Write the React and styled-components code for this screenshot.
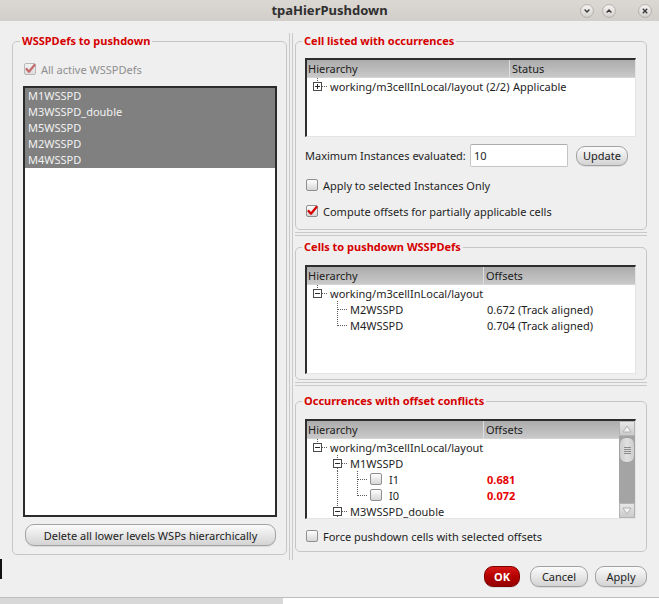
import React from 'react';
import styled, { createGlobalStyle } from 'styled-components';

/**
 * tpaHierPushdown dialog
 *
 */

const GlobalStyle = createGlobalStyle`
  html, body {
    margin: 0;
    padding: 0;
    background: #ffffff;
  }

  body {
    font-family: "Noto Sans", "DejaVu Sans", sans-serif;
    font-size: 11px;
    color: #1e1e1e;
  }

  * {
    box-sizing: border-box;
  }
`;

const Window = styled.div`
  position: relative;
  width: 659px;
  height: 598px;
  display: flex;
  flex-direction: column;
  background: #efefef;
  border-bottom: 1px solid #bdbdbd;
`;

const Backdrop = styled.div`
  width: 283px;
  height: 6px;
  background: #d8d8d8;
`;

const EdgeMark = styled.span`
  position: absolute;
  left: 0;
  top: 559px;
  width: 2px;
  height: 20px;
  background: #111111;
`;

const TitleBar = styled.header`
  flex: none;
  height: 21px;
  display: grid;
  grid-template-columns: 1fr auto 1fr;
  align-items: center;
  background: linear-gradient(#dbd7d3, #d2cec9);
`;

const TitleText = styled.h1`
  grid-column: 2;
  margin: 0;
  font-size: 13px;
  font-weight: bold;
  line-height: 21px;
  color: #2f2f2f;
`;

const WinButtons = styled.div`
  grid-column: 3;
  justify-self: end;
  display: flex;
  align-items: center;
  gap: 8px;
  padding-right: 7px;
`;

const WinSvg = styled.svg`
  display: block;
  flex: none;
  margin-left: ${({ $gapBefore }) => $gapBefore || 0}px;
`;

const Body = styled.div`
  flex: 1;
  display: flex;
  flex-direction: column;
  padding: 12px 12px 10px;
`;

const Main = styled.div`
  flex: none;
  height: 527px;
  display: flex;
  align-items: flex-start;
`;

const Group = styled.fieldset`
  margin: 0;
  min-width: 0;
  display: flex;
  flex-direction: column;
  border: 1px solid #c6c6c6;
  border-radius: 5px;
  padding: ${({ $pad }) => $pad};
`;

const LeftGroup = styled(Group)`
  flex: none;
  width: 275px;
  height: 521px;
  margin-top: 1px;
`;

const Legend = styled.legend`
  margin-left: -3px;
  padding: 0 2px;
  font-size: 11px;
  font-weight: bold;
  line-height: 14px;
  color: #d60000;
`;

const VSplitter = styled.div`
  flex: none;
  align-self: stretch;
  width: 4px;
  margin: 0 2px;
  border-left: 1px solid #c9c9c9;
  border-right: 1px solid #c9c9c9;
`;

const RightColumn = styled.div`
  flex: none;
  width: 352px;
  margin-top: 1px;
  display: flex;
  flex-direction: column;
`;

const HSplitter = styled.div`
  flex: none;
  height: 4px;
  margin: ${({ $top }) => $top}px 0 ${({ $bottom }) => $bottom}px;
  border-top: 1px solid #c9c9c9;
  border-bottom: 1px solid #c9c9c9;
`;

/* check boxes */

const CheckRow = styled.label`
  display: flex;
  align-items: center;
  gap: 5px;
  height: 16px;
  margin-top: ${({ $top }) => $top}px;
  padding-left: 1px;
  color: ${({ $disabled }) => ($disabled ? '#8e8e8e' : 'inherit')};
  white-space: nowrap;
`;

const Box = styled.span`
  flex: none;
  width: 12px;
  height: 12px;
  display: flex;
  align-items: center;
  justify-content: center;
  border: 1px solid ${({ $disabled }) => ($disabled ? '#b9b9b9' : '#8f8f8f')};
  border-radius: 2px;
  background: ${({ $disabled }) => ($disabled
    ? 'linear-gradient(#f2f2f2, #dddddd)'
    : 'linear-gradient(#fefefe, #d6d6d6)')};
`;

const CheckSvg = styled.svg`
  display: block;
  overflow: visible;
`;

const CheckBox = ({ checked, disabled }) => (
  <Box $disabled={disabled}>
    {checked ? (
      <CheckSvg width="10" height="10" viewBox="0 0 10 10">
        <path
          d="M1.5 5 L4 7.8 L9.5 1"
          fill="none"
          stroke={disabled ? '#c46a6a' : '#d40000'}
          strokeWidth="2.2"
          strokeLinecap="round"
          strokeLinejoin="round"
        />
      </CheckSvg>
    ) : null}
  </Box>
);

/* list */

const ListBox = styled.div`
  flex: 1;
  margin-top: 9px;
  background: #ffffff;
  border: 2px solid #2b2b2b;
`;

const ListItem = styled.div`
  height: 16px;
  line-height: 16px;
  padding-left: 3px;
  background: ${({ $selected }) => ($selected ? '#808080' : 'transparent')};
  color: ${({ $selected }) => ($selected ? '#f2f2f2' : 'inherit')};
`;

/* buttons */

const PillButton = styled.button`
  flex: none;
  width: ${({ $w }) => ($w ? `${$w}px` : 'auto')};
  height: ${({ $h }) => $h || 21}px;
  margin: ${({ $margin }) => $margin || 0};
  padding: 0;
  font-family: inherit;
  font-size: 11px;
  color: #222222;
  border: 1px solid #a2a2a2;
  border-radius: 9px;
  background: linear-gradient(#fbfbfb, #e9e9e9 45%, #d3d3d3);
  box-shadow: 0 1px 0 rgba(0, 0, 0, 0.08);
`;

const OkButton = styled(PillButton)`
  font-weight: bold;
  color: #ffffff;
  border-color: #7c0000;
  background: linear-gradient(#d81818, #b40000 50%, #960000);
`;

const ButtonRow = styled.div`
  display: flex;
  justify-content: flex-end;
  margin-top: 6px;
`;

/* max instances row */

const MaxRow = styled.div`
  display: grid;
  grid-template-columns: 165px 98px 60px;
  column-gap: 0;
  align-items: center;
  margin-top: 7px;
  height: 23px;

  & > button {
    margin-left: 8px;
  }
`;

const NumberInput = styled.input`
  width: 98px;
  height: 23px;
  padding: 0 0 0 3px;
  font-family: inherit;
  font-size: 11px;
  color: #1e1e1e;
  background: #ffffff;
  border: 1px solid #c4c4c4;
  border-top-color: #acacac;
  border-radius: 2px;
  outline: none;
`;

/* trees */

const TreeBox = styled.div`
  flex: none;
  display: flex;
  height: ${({ $h }) => $h}px;
  margin-top: ${({ $top }) => $top}px;
  overflow: hidden;
  background: #ffffff;
  border-style: solid;
  border-width: 2px 1px 1px 2px;
  border-color: #2e2e2e #e4e4e4 #e4e4e4 #2e2e2e;
`;

const TreeBody = styled.div`
  flex: 1;
  min-width: 0;
`;

const HeaderRow = styled.div`
  display: grid;
  grid-template-columns: ${({ $col }) => $col}px 1fr;
  height: 18px;
  line-height: 18px;
  background: linear-gradient(#acacac, #bdbdbd 60%, #c9c9c9);
  border-bottom: 1px solid #d4d4d4;
`;

const HeaderCell = styled.div`
  padding-left: 1px;
  color: #1c1c1c;

  & + & {
    padding-left: 2px;
    border-left: 1px solid #dedede;
  }
`;

const TreeRow = styled.div`
  display: grid;
  grid-template-columns: ${({ $col }) => $col}px 1fr;
  height: 16px;
  align-items: center;
`;

const NodeCell = styled.div`
  display: flex;
  align-items: center;
  height: 16px;
  white-space: nowrap;
`;

const NodeLabel = styled.span`
  margin-left: ${({ $gap }) => $gap || 3}px;
`;

const NodeCheck = styled.span`
  margin-left: 3px;
  display: flex;
`;

const ValueCell = styled.div`
  padding-left: 4px;
  white-space: nowrap;
  font-weight: ${({ $conflict }) => ($conflict ? 'bold' : 'normal')};
  color: ${({ $conflict }) => ($conflict ? '#e60000' : 'inherit')};
`;

const GuideSvg = styled.svg`
  display: block;
  flex: none;
`;

const dots = {
  stroke: '#5c5c5c',
  strokeWidth: 1,
  strokeDasharray: '1 1',
};

const Guide = ({ kind, up, down }) => (
  <GuideSvg width="20" height="16" viewBox="0 0 20 16" shapeRendering="crispEdges">
    {kind === 'line' || kind === 'tee' ? <line x1="10.5" y1="0" x2="10.5" y2="16" {...dots} /> : null}
    {kind === 'elbow' ? <line x1="10.5" y1="0" x2="10.5" y2="9" {...dots} /> : null}
    {kind === 'tee' || kind === 'elbow' ? <line x1="11" y1="8.5" x2="20" y2="8.5" {...dots} /> : null}
    {kind === 'plus' || kind === 'minus' ? (
      <g>
        {up ? <line x1="10.5" y1="0" x2="10.5" y2="4" {...dots} /> : null}
        {down ? <line x1="10.5" y1="13" x2="10.5" y2="16" {...dots} /> : null}
        <rect x="6.5" y="4.5" width="8" height="8" fill="#ffffff" stroke="#4a4a4a" />
        <line x1="8" y1="8.5" x2="13" y2="8.5" stroke="#2a2a2a" />
        {kind === 'plus' ? <line x1="10.5" y1="6" x2="10.5" y2="11" stroke="#2a2a2a" /> : null}
        <line x1="15" y1="8.5" x2="20" y2="8.5" {...dots} />
      </g>
    ) : null}
  </GuideSvg>
);

const ScrollBar = styled.div`
  flex: none;
  width: 16px;
  display: flex;
  flex-direction: column;
  background: #a4a4a4;
`;

const ScrollArrow = styled.div`
  flex: none;
  height: 15px;
  display: flex;
  align-items: center;
  justify-content: center;
  background: linear-gradient(#e6e6e6, #cbcbcb);
  border: 1px solid #b3b3b3;
`;

const ScrollThumb = styled.div`
  flex: none;
  height: 26px;
  margin: 1px 0 0;
  display: flex;
  flex-direction: column;
  align-items: center;
  justify-content: center;
  gap: 1px;
  border: 1px solid #a0a0a0;
  border-radius: 7px;
  background: linear-gradient(90deg, #cdcdcd, #e0e0e0 50%, #cdcdcd);
`;

const Grip = styled.span`
  width: 7px;
  height: 1px;
  background: #8c8c8c;
`;

const ScrollTrack = styled.div`
  flex: 1;
`;

const Arrow = ({ dir }) => (
  <svg width="10" height="8" viewBox="0 0 10 8">
    <polygon
      points={dir === 'up' ? '1,7 5,1 9,7' : '1,1 5,7 9,1'}
      fill="#f4f4f4"
      stroke="#b0b0b0"
      strokeWidth="1"
    />
  </svg>
);

const Tree = ({ height, top, col, columns, rows, scroll }) => (
  <TreeBox $h={height} $top={top}>
    <TreeBody>
      <HeaderRow $col={col}>
        {columns.map(name => <HeaderCell key={name}>{name}</HeaderCell>)}
      </HeaderRow>
      {rows.map(row => (
        <TreeRow $col={col} key={row.label}>
          <NodeCell>
            {row.guides.map((g, i) => <Guide key={i} {...g} />)}
            {row.check ? <NodeCheck><CheckBox /></NodeCheck> : null}
            <NodeLabel $gap={row.check ? 7 : 3}>{row.label}</NodeLabel>
          </NodeCell>
          <ValueCell $conflict={row.conflict}>{row.value}</ValueCell>
        </TreeRow>
      ))}
    </TreeBody>
    {scroll ? (
      <ScrollBar>
        <ScrollArrow><Arrow dir="up" /></ScrollArrow>
        <ScrollThumb>
          <Grip />
          <Grip />
          <Grip />
          <Grip />
        </ScrollThumb>
        <ScrollTrack />
        <ScrollArrow><Arrow dir="down" /></ScrollArrow>
      </ScrollBar>
    ) : null}
  </TreeBox>
);

const WinButton = ({ glyph, gapBefore }) => (
  <WinSvg width="14" height="14" viewBox="0 0 14 14" $gapBefore={gapBefore}>
    <defs>
      <linearGradient id="winbg" x1="0" y1="0" x2="0" y2="1">
        <stop offset="0" stopColor="#f6f5f4" />
        <stop offset="1" stopColor="#d3d0cd" />
      </linearGradient>
    </defs>
    <circle cx="7" cy="7" r="6.4" fill="url(#winbg)" stroke="#aaa6a2" strokeWidth="0.8" />
    {glyph === 'down' ? <polyline points="4.6,5.6 7,8 9.4,5.6" fill="none" stroke="#3b3b3b" strokeWidth="1.4" /> : null}
    {glyph === 'up' ? <polyline points="4.6,8.4 7,6 9.4,8.4" fill="none" stroke="#3b3b3b" strokeWidth="1.4" /> : null}
    {glyph === 'close' ? (
      <g stroke="#3b3b3b" strokeWidth="1.4">
        <line x1="4.8" y1="4.8" x2="9.2" y2="9.2" />
        <line x1="9.2" y1="4.8" x2="4.8" y2="9.2" />
      </g>
    ) : null}
  </WinSvg>
);

const wsspDefs = ['M1WSSPD', 'M3WSSPD_double', 'M5WSSPD', 'M2WSSPD', 'M4WSSPD'];

const cellRows = [
  {
    guides: [{ kind: 'plus', up: true }],
    label: 'working/m3cellInLocal/layout (2/2)',
    value: 'Applicable',
  },
];

const pushdownRows = [
  { guides: [{ kind: 'minus', up: true }], label: 'working/m3cellInLocal/layout' },
  { guides: [{ kind: 'blank' }, { kind: 'tee' }], label: 'M2WSSPD', value: '0.672 (Track aligned)' },
  { guides: [{ kind: 'blank' }, { kind: 'elbow' }], label: 'M4WSSPD', value: '0.704 (Track aligned)' },
];

const conflictRows = [
  { guides: [{ kind: 'minus', up: true }], label: 'working/m3cellInLocal/layout' },
  { guides: [{ kind: 'blank' }, { kind: 'minus', up: true, down: true }], label: 'M1WSSPD' },
  {
    guides: [{ kind: 'blank' }, { kind: 'line' }, { kind: 'tee' }],
    label: 'I1',
    check: true,
    value: '0.681',
    conflict: true,
  },
  {
    guides: [{ kind: 'blank' }, { kind: 'line' }, { kind: 'elbow' }],
    label: 'I0',
    check: true,
    value: '0.072',
    conflict: true,
  },
  { guides: [{ kind: 'blank' }, { kind: 'minus', up: true, down: true }], label: 'M3WSSPD_double' },
];

const App = () => (
  <>
    <GlobalStyle />
    <Window>
      <TitleBar>
        <TitleText>tpaHierPushdown</TitleText>
        <WinButtons>
          <WinButton glyph="down" />
          <WinButton glyph="up" />
          <WinButton glyph="close" gapBefore={14} />
        </WinButtons>
      </TitleBar>

      <Body>
        <Main>
          {/* left: WSSPDefs list */}
          <LeftGroup $pad="0 9px 8px 10px">
            <Legend>WSSPDefs to pushdown</Legend>
            <CheckRow $top={13} $disabled>
              <CheckBox checked disabled />
              All active WSSPDefs
            </CheckRow>
            <ListBox>
              {wsspDefs.map(name => (
                <ListItem key={name} $selected>{name}</ListItem>
              ))}
            </ListBox>
            <PillButton $h={22} $margin="7px 1px 0 2px">
              Delete all lower levels WSPs hierarchically
            </PillButton>
          </LeftGroup>

          <VSplitter />

          {/* right: three stacked groups */}
          <RightColumn>
            <Group $pad="0 10px 10px 9px">
              <Legend>Cell listed with occurrences</Legend>
              <Tree
                height={79}
                top={10}
                col={202}
                columns={['Hierarchy', 'Status']}
                rows={cellRows}
              />
              <MaxRow>
                <span>Maximum Instances evaluated:</span>
                <NumberInput defaultValue="10" />
                <PillButton $h={20}>Update</PillButton>
              </MaxRow>
              <CheckRow $top={10}>
                <CheckBox />
                Apply to selected Instances Only
              </CheckRow>
              <CheckRow $top={10}>
                <CheckBox checked />
                Compute offsets for partially applicable cells
              </CheckRow>
            </Group>

            <HSplitter $top={2} $bottom={4} />

            <Group $pad="0 10px 5px 9px">
              <Legend>Cells to pushdown WSSPDefs</Legend>
              <Tree
                height={109}
                top={11}
                col={176}
                columns={['Hierarchy', 'Offsets']}
                rows={pushdownRows}
              />
            </Group>

            <HSplitter $top={2} $bottom={8} />

            <Group $pad="0 10px 7px 9px">
              <Legend>Occurrences with offset conflicts</Legend>
              <Tree
                height={100}
                top={11}
                col={176}
                columns={['Hierarchy', 'Offsets']}
                rows={conflictRows}
                scroll
              />
              <CheckRow $top={9}>
                <CheckBox />
                Force pushdown cells with selected offsets
              </CheckRow>
            </Group>
          </RightColumn>
        </Main>

        <ButtonRow>
          <OkButton $w={36}>OK</OkButton>
          <PillButton $w={58} $margin="0 0 0 10px">Cancel</PillButton>
          <PillButton $w={52} $margin="0 0 0 7px">Apply</PillButton>
        </ButtonRow>
      </Body>
      <EdgeMark />
    </Window>
    <Backdrop />
  </>
);

export default App;
